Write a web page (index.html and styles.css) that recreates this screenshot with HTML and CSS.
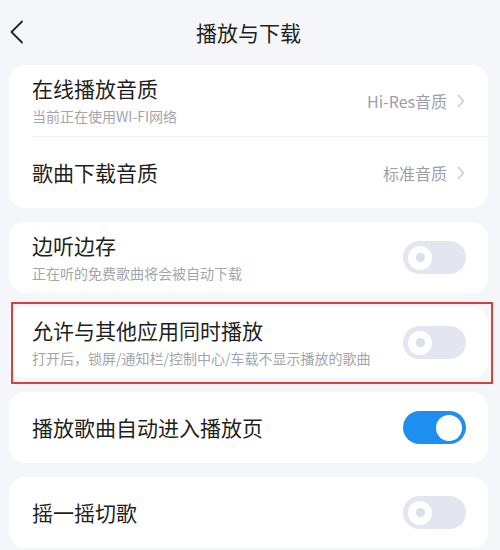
FILE: index.html
```
<!DOCTYPE html>
<html lang="zh-CN">
<head>
<meta charset="utf-8">
<link rel="stylesheet" href="styles.css">
</head>
<body>
<div class="page">
  <header class="header">
    <svg class="back" width="16" height="24" viewBox="0 0 16 24"><path d="M13 1.5 L2.5 12 L13 22.5" fill="none" stroke="#222" stroke-width="1.8" stroke-linecap="round" stroke-linejoin="round"/></svg>
    <div class="title">播放与下载</div>
  </header>

  <section class="card card-first">
    <div class="row">
      <div class="text">
        <div class="name">在线播放音质</div>
        <div class="desc">当前正在使用WI-FI网络</div>
      </div>
      <div class="value">Hi-Res音质</div>
      <svg class="chev" width="8" height="14" viewBox="0 0 8 14"><path d="M1.5 1.5 L6.5 7 L1.5 12.5" fill="none" stroke="#c9c9cc" stroke-width="1.4" stroke-linecap="round" stroke-linejoin="round"/></svg>
    </div>
    <div class="divider"></div>
    <div class="row">
      <div class="text">
        <div class="name">歌曲下载音质</div>
      </div>
      <div class="value">标准音质</div>
      <svg class="chev" width="8" height="14" viewBox="0 0 8 14"><path d="M1.5 1.5 L6.5 7 L1.5 12.5" fill="none" stroke="#c9c9cc" stroke-width="1.4" stroke-linecap="round" stroke-linejoin="round"/></svg>
    </div>
  </section>

  <section class="card">
    <div class="row">
      <div class="text">
        <div class="name">边听边存</div>
        <div class="desc">正在听的免费歌曲将会被自动下载</div>
      </div>
      <div class="toggle"><span class="knob"></span></div>
    </div>
  </section>

  <section class="card card-marked">
    <div class="row">
      <div class="text">
        <div class="name">允许与其他应用同时播放</div>
        <div class="desc">打开后，锁屏/通知栏/控制中心/车载不显示播放的歌曲</div>
      </div>
      <div class="toggle"><span class="knob"></span></div>
    </div>
    <div class="mark"></div>
  </section>

  <section class="card">
    <div class="row">
      <div class="text">
        <div class="name">播放歌曲自动进入播放页</div>
      </div>
      <div class="toggle on"><span class="knob"></span></div>
    </div>
  </section>

  <section class="card">
    <div class="row">
      <div class="text">
        <div class="name">摇一摇切歌</div>
      </div>
      <div class="toggle"><span class="knob"></span></div>
    </div>
  </section>
</div>
</body>
</html>
```

FILE: styles.css
```
* { box-sizing: border-box; }
html, body {
  margin: 0;
  padding: 0;
  background: #f5f6fa;
  font-family: "Noto Sans CJK SC", "Noto Sans", sans-serif;
  color: #1f1f21;
  width: 500px;
  height: 550px;
  overflow: hidden;
}
.page {
  display: flex;
  flex-direction: column;
  gap: 14px;
  padding: 0 12px 0 9px;
}
.header {
  position: relative;
  height: 51px;
  display: flex;
  align-items: center;
  justify-content: center;
}
.back {
  position: absolute;
  left: 0;
  top: 20px;
}
.title {
  font-size: 21px;
  line-height: 28px;
  padding-top: 12px;
  color: #1f1f21;
}
.card {
  background: #fff;
  border-radius: 16px;
  display: flex;
  flex-direction: column;
}
.card-marked { position: relative; }
.mark {
  position: absolute;
  left: 2px;
  top: -5px;
  width: 482px;
  height: 82px;
  border: 2px solid #dc3f3a;
}
.row {
  height: 71px;
  display: flex;
  align-items: center;
  padding: 0 22px 0 23px;
}
.text {
  flex: 1;
  display: flex;
  flex-direction: column;
}
.name {
  font-size: 21px;
  line-height: 25px;
}
.desc {
  font-size: 14px;
  line-height: 20px;
  margin-top: 5px;
  color: #a3a5ab;
}
.divider {
  height: 1px;
  background: #efeff2;
  margin-left: 23px;
}
.value {
  font-size: 16px;
  color: #9c9ea3;
  margin-right: 10px;
}
.chev { margin-right: 1px; }
.toggle {
  width: 63px;
  height: 33px;
  border-radius: 17px;
  background: #e3e6f0;
  display: flex;
  align-items: center;
  padding-left: 5px;
}
.knob {
  width: 24px;
  height: 24px;
  border-radius: 50%;
  background: #fff;
  display: flex;
  align-items: center;
  justify-content: center;
}
.knob::after {
  content: "";
  width: 9px;
  height: 9px;
  border-radius: 50%;
  background: #dcdfe9;
}
.toggle.on {
  background: #1f8ef1;
  justify-content: flex-end;
  padding: 0 4px 0 0;
}
.toggle.on .knob {
  width: 26px;
  height: 26px;
}
.toggle.on .knob::after { display: none; }
```
